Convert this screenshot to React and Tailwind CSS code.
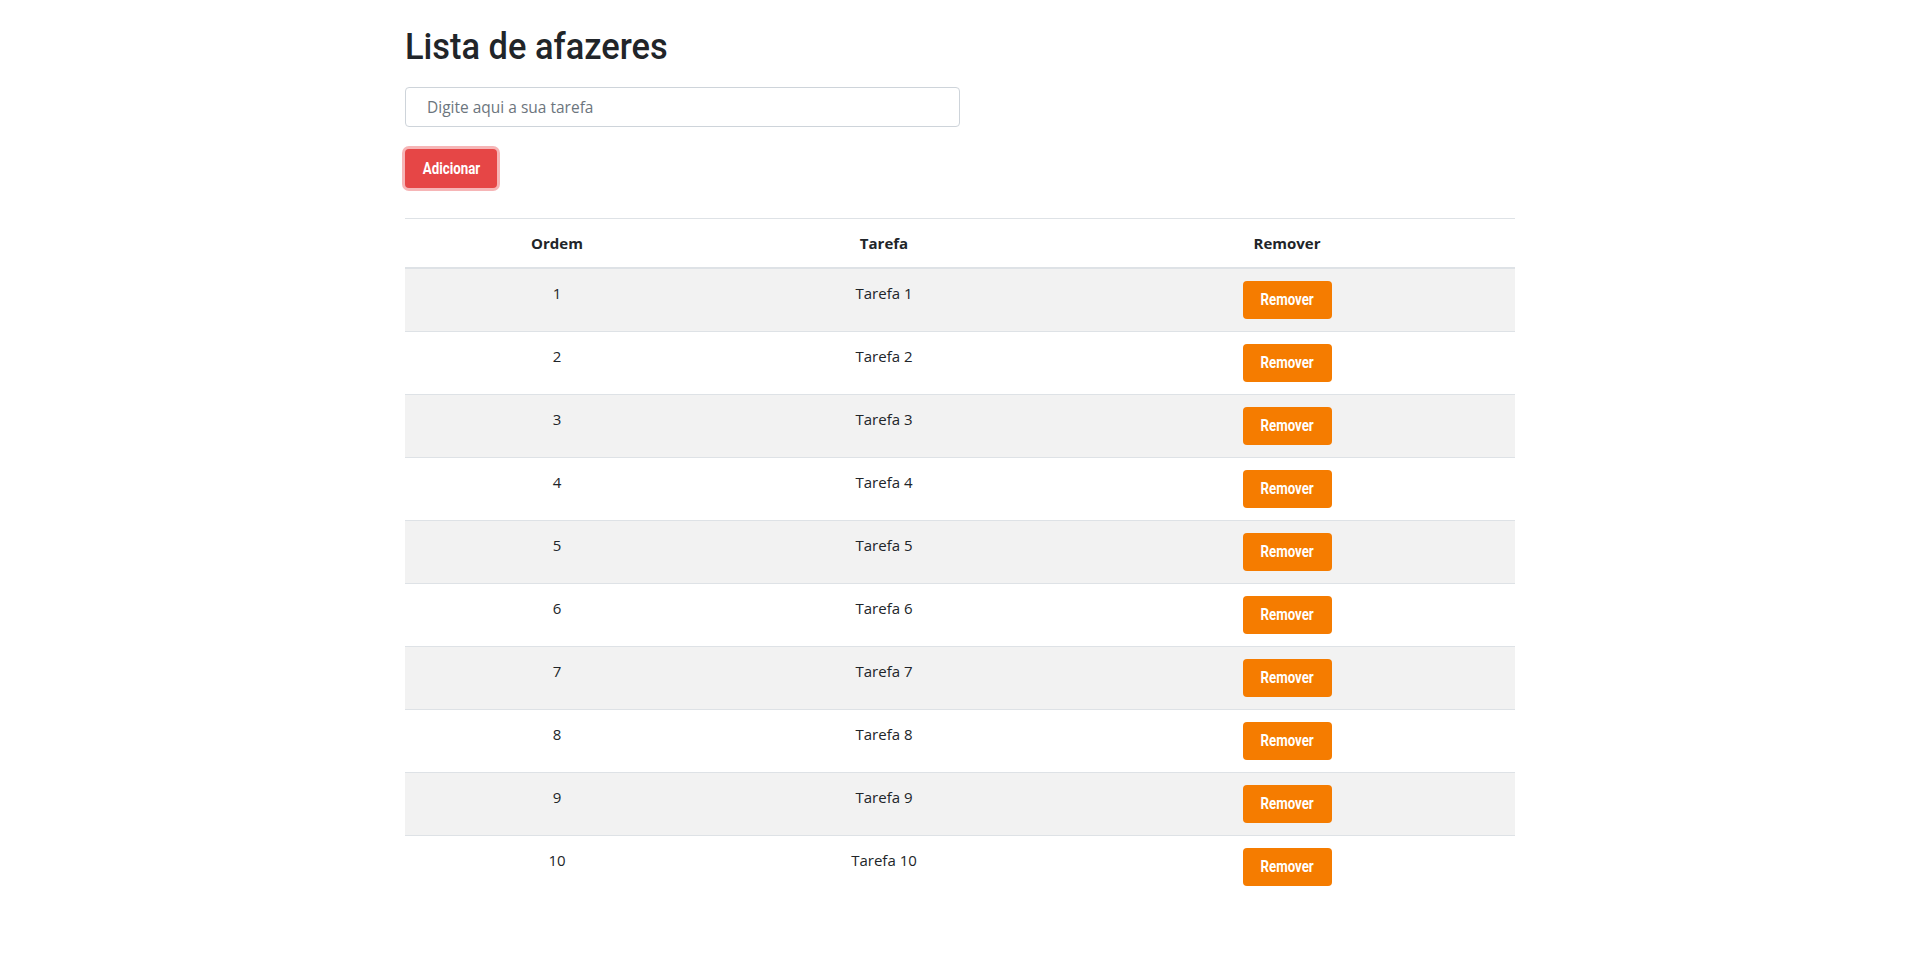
import React, { useState } from 'react';

const titleFont = { fontFamily: 'Roboto, "Liberation Sans", sans-serif' };
const btnFont = { fontFamily: 'Roboto, "Liberation Sans", sans-serif' };

const App = () => {
  const [tarefas, setTarefas] = useState(
    Array.from({ length: 10 }, (_, i) => `Tarefa ${i + 1}`)
  );
  const [texto, setTexto] = useState('');

  // adiciona nova tarefa na lista
  const adicionar = () => {
    if (!texto.trim()) return;
    setTarefas([...tarefas, texto]);
    setTexto('');
  };

  const remover = (idx) => {
    setTarefas(tarefas.filter((_, i) => i !== idx));
  };

  return (
    <div className="min-h-screen bg-white text-[#212529]" style={{ fontFamily: '"Open Sans", "Noto Sans", sans-serif' }}>
      <div className="w-[1110px] mx-auto pt-[25px]">
        <h1 className="text-[37px] leading-[44px] font-medium mb-[18px]" style={titleFont}>
          <span className="inline-block origin-left scale-x-[0.93]">Lista de afazeres</span>
        </h1>

        <input
          type="text"
          value={texto}
          onChange={(e) => setTexto(e.target.value)}
          placeholder="Digite aqui a sua tarefa"
          className="block w-[555px] h-[40px] border border-[#ced4da] rounded-[4px] px-[21px] text-[15.5px] placeholder:text-[#6c757d] outline-none"
        />

        <button
          onClick={adicionar}
          className="mt-[22px] w-[92px] h-[39px] rounded-[4px] bg-[#e64646] text-white text-[16px] font-bold shadow-[0_0_0_3px_#f6b5b6]"
          style={btnFont}
        >
          <span className="inline-block scale-x-[0.83]">Adicionar</span>
        </button>

        {/* tabela de tarefas */}
        <div className="mt-[30px] border-t border-[#dee2e6] text-[15px]">
          <div className="grid grid-cols-[304px_350px_456px] border-b-2 border-[#dee2e6] font-bold text-center">
            <div className="py-[12px] leading-[24px]">Ordem</div>
            <div className="py-[12px] leading-[24px]">Tarefa</div>
            <div className="py-[12px] leading-[24px]">Remover</div>
          </div>
          {tarefas.map((t, i) => (
            <div
              key={i}
              className={`grid grid-cols-[304px_350px_456px] text-center ${i % 2 === 0 ? 'bg-[#f2f2f2]' : 'bg-white'} ${i < tarefas.length - 1 ? 'border-b border-[#dee2e6]' : ''}`}
            >
              <div className="py-[12px] leading-[24px]">{i + 1}</div>
              <div className="py-[12px] leading-[24px]">{t}</div>
              <div className="py-[12px] flex justify-center">
                <button
                  onClick={() => remover(i)}
                  className="w-[89px] h-[38px] rounded-[4px] bg-[#f57c00] text-white text-[16px] font-bold"
                  style={btnFont}
                >
                  <span className="inline-block scale-x-[0.83]">Remover</span>
                </button>
              </div>
            </div>
          ))}
        </div>
      </div>
    </div>
  );
};

export default App;
